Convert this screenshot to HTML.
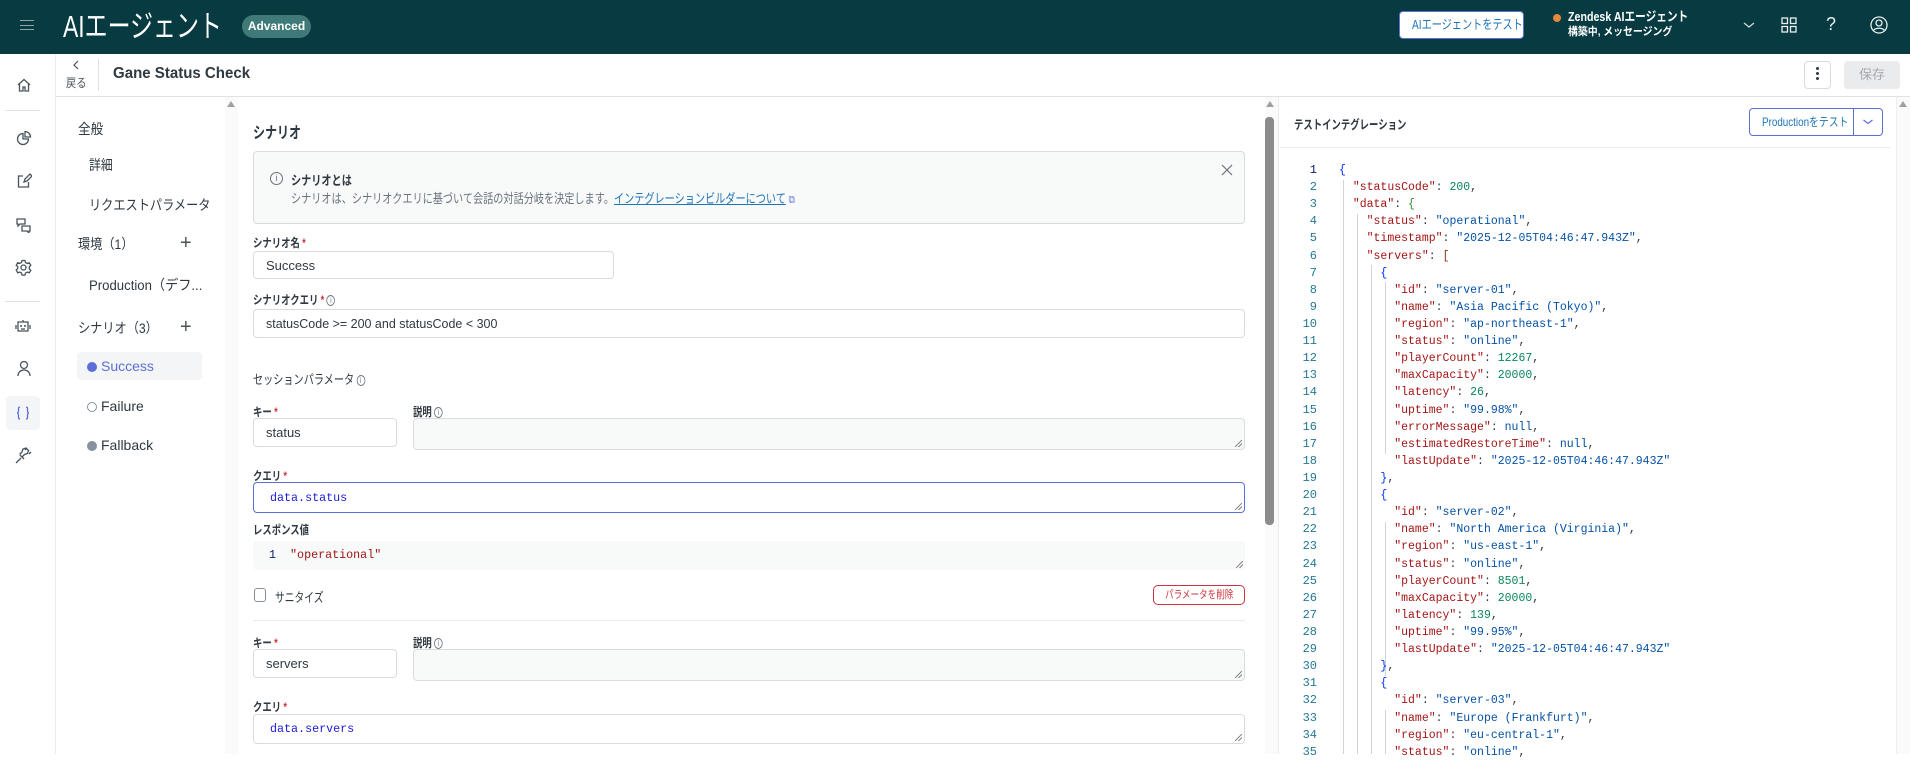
<!DOCTYPE html>
<html><head><meta charset="utf-8"><style>
*{box-sizing:border-box;margin:0;padding:0}
body{width:1910px;height:754px;overflow:hidden;background:#fff;font-family:"Liberation Sans","Noto Sans CJK JP",sans-serif;color:#2f3941;position:relative;font-size:13px}
.a{position:absolute;white-space:nowrap}
.sx{display:inline-block;transform:scaleX(.76);transform-origin:0 50%;white-space:nowrap}
.hdr{left:0;top:0;width:1910px;height:54px;background:#073a41}
.ic{stroke:#49545c;fill:none;stroke-width:1.3}
.lbl{font-size:12px;font-weight:bold;color:#2f3941}
.req{color:#cc3340;margin-left:3px}
.inp{border:1px solid #d8dcde;border-radius:4px;background:#fff;font-size:13px;padding-left:12px;display:flex;align-items:center}
.gray{background:#f8f9f9}
.mono{font-family:"Liberation Mono",monospace}
.code{left:1290px;top:162px;font-family:"Liberation Mono",monospace;font-size:11.5px;line-height:17.12px;white-space:pre}
.code div{height:17.12px;overflow:visible}
.ln{display:inline-block;width:27px;text-align:right;color:#237893;margin-right:22px;font-size:12px}
.k{color:#a31515}.s{color:#0451a5}.n{color:#098658}.b1{color:#0431fa}.b2{color:#319331}.b3{color:#7b3814}.nl{color:#0451a5}
.info{display:inline-block;width:11px;height:11px;border:1px solid #68737d;border-radius:50%;font-size:8px;line-height:9px;text-align:center;color:#68737d;font-weight:normal;vertical-align:1px;margin-left:3px}
.nav{font-size:14px;color:#2f3941}
.rz{position:absolute;right:2px;bottom:2px;width:7px;height:7px;background:linear-gradient(135deg,transparent 45%,#888 45%,#888 55%,transparent 55%,transparent 70%,#888 70%,#888 80%,transparent 80%)}
</style></head><body>
<div class="a hdr"></div>
<div class="a" style="left:20px;top:20px;width:14px;height:10px;border-top:1.5px solid #8fa5a8;border-bottom:1.5px solid #8fa5a8"></div>
<div class="a" style="left:20px;top:24.5px;width:14px;height:1.5px;background:#8fa5a8"></div>
<div class="a" style="left:63px;top:6px;font-size:31px;color:#fff;line-height:42px"><span class="sx" style="transform:scaleX(.74)">AIエージェント</span></div>
<div class="a" style="left:242px;top:15px;width:69px;height:23px;border-radius:12px;background:#3f7a78;color:#fff;font-size:12px;font-weight:bold;line-height:23px;text-align:center">Advanced</div>
<div class="a" style="left:1399px;top:11px;width:125px;height:28px;background:#fff;border:1px solid #5d73d4;border-radius:4px;color:#1f73b7;font-size:13px;line-height:26px;padding-left:12px"><span class="sx" style="transform:scaleX(.78)">AIエージェントをテスト</span></div>
<div class="a" style="left:1553px;top:14px;width:8px;height:8px;border-radius:50%;background:#e38a3e"></div>
<div class="a" style="left:1568px;top:9px;color:#fff;font-size:13px;font-weight:bold;line-height:16px"><span class="sx" style="transform:scaleX(.82)">Zendesk AIエージェント</span></div>
<div class="a" style="left:1568px;top:25px;color:#fff;font-size:11px;font-weight:bold;line-height:14px"><span class="sx" style="transform:scaleX(.9)">構築中, メッセージング</span></div>
<svg class="a" style="left:1742px;top:20px" width="14" height="10"><path d="M2 3l5 4 5-4" stroke="#cfd8d9" fill="none" stroke-width="1.3"/></svg>
<svg class="a" style="left:1780px;top:16px" width="18" height="18"><g stroke="#e8eeee" fill="none" stroke-width="1.3"><rect x="2" y="2" width="5.5" height="5.5"/><rect x="10.5" y="2" width="5.5" height="5.5"/><rect x="2" y="10.5" width="5.5" height="5.5"/><rect x="10.5" y="10.5" width="5.5" height="5.5"/></g></svg>
<div class="a" style="left:1826px;top:14px;color:#e8eeee;font-size:18px">?</div>
<svg class="a" style="left:1869px;top:15px" width="20" height="20"><g stroke="#e8eeee" fill="none" stroke-width="1.3"><circle cx="10" cy="10" r="8"/><circle cx="10" cy="8" r="3"/><path d="M4.5 15.5c2-3 9-3 11 0"/></g></svg>

<!-- left rail -->
<div class="a" style="left:55px;top:54px;width:1px;height:700px;background:#e9ebed"></div>
<div class="a" style="left:5px;top:110px;width:35px;height:1px;background:#e0e3e5"></div>
<div class="a" style="left:5px;top:301px;width:35px;height:1px;background:#e0e3e5"></div>
<div class="a" style="left:6px;top:396px;width:34px;height:34px;border-radius:4px;background:#f3f5f6"></div>
<svg class="a" style="left:16px;top:77px" width="16" height="16"><path class="ic" d="M2 8L8 2.5 14 8M3.5 6.5V14h3.5v-4h2v4h3.5V6.5"/></svg>
<svg class="a" style="left:16px;top:130px" width="16" height="16"><path class="ic" d="M7 3.5a5.5 5.5 0 1 0 5.5 5.5H7zM9 1.5v5.5h5.5A5.5 5.5 0 0 0 9 1.5z"/></svg>
<svg class="a" style="left:16px;top:173px" width="16" height="16"><path class="ic" d="M7 3H2.5v11h10V9M8 9l1-3 5-5 2 2-5 5z"/></svg>
<svg class="a" style="left:15px;top:217px" width="17" height="16"><path class="ic" d="M2 2h8v5H5l-2 2V7H2zM7 9h8v5h-1v2l-2-2H7z"/></svg>
<svg class="a" style="left:15px;top:259px" width="17" height="17"><circle class="ic" cx="8.5" cy="8.5" r="2.5"/><path class="ic" d="M7 1.5h3l.5 2 1.8 1 2-.7 1.5 2.6-1.5 1.4v2l1.5 1.4-1.5 2.6-2-.7-1.8 1-.5 2H7l-.5-2-1.8-1-2 .7L1.2 11l1.5-1.4v-2L1.2 6.3l1.5-2.6 2 .7 1.8-1z"/></svg>
<svg class="a" style="left:14px;top:318px" width="18" height="16"><path class="ic" d="M4 4h10v9H4zM2 7v4M16 7v4M9 2v2"/><circle cx="7" cy="8" r="1" fill="#49545c"/><circle cx="11" cy="8" r="1" fill="#49545c"/><path class="ic" d="M7 11h4"/></svg>
<svg class="a" style="left:16px;top:360px" width="16" height="17"><circle class="ic" cx="8" cy="5" r="3.5"/><path class="ic" d="M2 16c0-4 3-6 6-6s6 2 6 6"/></svg>
<svg class="a" style="left:15px;top:405px" width="16" height="16"><path d="M5 2C3 2 3.5 4 3.5 6S2 8 2 8s1.5 0 1.5 2S3 14 5 14M11 2c2 0 1.5 2 1.5 4S14 8 14 8s-1.5 0-1.5 2 .5 4-1.5 4" stroke="#5c6fd8" fill="none" stroke-width="1.3"/></svg>
<svg class="a" style="left:15px;top:447px" width="17" height="17"><path class="ic" d="M1 16l5-5M5 8l4 4M7 10l2.5-2.5 3-1 1-3L11 1 8 2 7 5 4.5 7.5M12 1l-2 2M16 5l-2 2"/></svg>

<!-- subheader -->
<div class="a" style="left:56px;top:96px;width:1854px;height:1px;background:#e0e3e5"></div>
<svg class="a" style="left:72px;top:60px" width="8" height="10"><path d="M6 1L2 5l4 4" stroke="#49545c" fill="none" stroke-width="1.2"/></svg>
<div class="a" style="left:66px;top:74px;font-size:12px;color:#49545c"><span class="sx" style="transform:scaleX(.85)">戻る</span></div>
<div class="a" style="left:98px;top:59px;width:1px;height:32px;background:#e0e3e5"></div>
<div class="a" style="left:113px;top:65px;font-size:16px;font-weight:bold;color:#2f3941"><span class="sx" style="transform:scaleX(.94)">Gane Status Check</span></div>
<div class="a" style="left:1804px;top:61px;width:27px;height:28px;border:1px solid #d8dcde;border-radius:4px;background:#fff"></div>
<div class="a" style="left:1816px;top:67px;width:3px;height:3px;background:#2f3941;border-radius:50%;box-shadow:0 5px 0 #2f3941,0 10px 0 #2f3941"></div>
<div class="a" style="left:1844px;top:61px;width:56px;height:28px;border-radius:4px;background:#e9ebed;color:#a2aab0;font-size:13px;line-height:28px;text-align:center">保存</div>

<!-- secondary nav -->
<div class="a" style="left:225px;top:97px;width:13px;height:657px;background:#fafafa"></div>
<div class="a" style="left:227px;top:101px;width:0;height:0;border-left:4.5px solid transparent;border-right:4.5px solid transparent;border-bottom:6px solid #a0a0a0"></div>
<div class="a nav" style="left:78px;top:119px"><span class="sx" style="transform:scaleX(.9)">全般</span></div>
<div class="a nav" style="left:89px;top:155px"><span class="sx" style="transform:scaleX(.85)">詳細</span></div>
<div class="a nav" style="left:89px;top:195px"><span class="sx" style="transform:scaleX(.87)">リクエストパラメータ</span></div>
<div class="a nav" style="left:78px;top:234px"><span class="sx" style="transform:scaleX(.87)">環境（1）</span></div>
<div class="a" style="left:180px;top:232px;font-size:20px;color:#49545c;font-weight:300">+</div>
<div class="a nav" style="left:89px;top:275px"><span class="sx" style="transform:scaleX(.94)">Production（デフ...</span></div>
<div class="a nav" style="left:78px;top:318px"><span class="sx" style="transform:scaleX(.87)">シナリオ（3）</span></div>
<div class="a" style="left:180px;top:316px;font-size:20px;color:#49545c;font-weight:300">+</div>
<div class="a" style="left:77px;top:352px;width:125px;height:28px;border-radius:4px;background:#f3f5f6"></div>
<div class="a" style="left:87px;top:362px;width:10px;height:10px;border-radius:50%;background:#5c6fd8"></div>
<div class="a nav" style="left:101px;top:358px;color:#5c6fd8">Success</div>
<div class="a" style="left:87px;top:402px;width:10px;height:10px;border-radius:50%;border:1px solid #87929d"></div>
<div class="a nav" style="left:101px;top:398px">Failure</div>
<div class="a" style="left:87px;top:441px;width:10px;height:10px;border-radius:50%;background:#87929d"></div>
<div class="a nav" style="left:101px;top:437px">Fallback</div>

<!-- main -->
<div class="a" style="left:1265px;top:97px;width:13px;height:657px;background:#fafafa"></div>
<div class="a" style="left:1266px;top:101px;width:0;height:0;border-left:4.5px solid transparent;border-right:4.5px solid transparent;border-bottom:6px solid #a0a0a0"></div>
<div class="a" style="left:1265px;top:117px;width:9px;height:408px;border-radius:4px;background:#8c8c8c"></div>
<div class="a" style="left:1278px;top:97px;width:1px;height:657px;background:#e9ebed"></div>

<div class="a" style="left:253px;top:119px;font-size:16px;font-weight:bold;color:#2f3941"><span class="sx" style="transform:scaleX(.75)">シナリオ</span></div>
<div class="a gray" style="left:253px;top:151px;width:992px;height:73px;border:1px solid #d8dcde;border-radius:4px"></div>
<div class="a" style="left:270px;top:172px;width:13px;height:13px;border:1px solid #68737d;border-radius:50%;font-size:9px;text-align:center;line-height:11px;color:#68737d">i</div>
<div class="a" style="left:291px;top:170px;font-size:13px;font-weight:bold"><span class="sx" style="transform:scaleX(.78)">シナリオとは</span></div>
<div class="a" style="left:291px;top:188px;font-size:13px;color:#68737d"><span class="sx" style="transform:scaleX(.78)">シナリオは、シナリオクエリに基づいて会話の対話分岐を決定します。<span style="color:#1f73b7;text-decoration:underline">インテグレーションビルダーについて</span> <span style="color:#5c6fd8;font-size:11px">⧉</span></span></div>
<svg class="a" style="left:1221px;top:164px" width="12" height="12"><path d="M1 1l10 10M11 1L1 11" stroke="#68737d" stroke-width="1.2"/></svg>

<div class="a lbl" style="left:253px;top:234px"><span class="sx" style="transform:scaleX(.78)">シナリオ名<span class="req">*</span></span></div>
<div class="a inp" style="left:253px;top:251px;width:361px;height:28px">Success</div>
<div class="a lbl" style="left:253px;top:291px"><span class="sx" style="transform:scaleX(.78)">シナリオクエリ<span class="req">*</span><span class="info">i</span></span></div>
<div class="a inp" style="left:253px;top:309px;width:992px;height:29px"><span class="sx" style="transform:scaleX(.96)">statusCode &gt;= 200 and statusCode &lt; 300</span></div>
<div class="a" style="left:253px;top:369px;font-size:13px"><span class="sx" style="transform:scaleX(.78)">セッションパラメータ<span class="info">i</span></span></div>

<div class="a lbl" style="left:253px;top:403px"><span class="sx" style="transform:scaleX(.78)">キー<span class="req">*</span></span></div>
<div class="a lbl" style="left:413px;top:403px"><span class="sx" style="transform:scaleX(.78)">説明<span class="info">i</span></span></div>
<div class="a inp" style="left:253px;top:418px;width:144px;height:29px">status</div>
<div class="a inp gray" style="left:413px;top:418px;width:832px;height:32px"><span class="rz"></span></div>
<div class="a lbl" style="left:253px;top:467px"><span class="sx" style="transform:scaleX(.78)">クエリ<span class="req">*</span></span></div>
<div class="a inp mono" style="left:253px;top:482px;width:992px;height:31px;border-color:#5c6fd8;color:#1a1ad8;padding-left:16px;font-size:11.7px">data.status<span class="rz"></span></div>
<div class="a lbl" style="left:253px;top:521px"><span class="sx" style="transform:scaleX(.78)">レスポンス値</span></div>
<div class="a gray mono" style="left:253px;top:541px;width:992px;height:29px;border-radius:4px;font-size:11.7px;line-height:29px;padding-left:16px"><span style="color:#0b216f">1</span>&nbsp;&nbsp;<span style="color:#a31515">"operational"</span><span class="rz"></span></div>
<div class="a" style="left:254px;top:588px;width:12px;height:14px;border:1px solid #87929d;border-radius:3px"></div>
<div class="a" style="left:275px;top:587px;font-size:13px"><span class="sx" style="transform:scaleX(.75)">サニタイズ</span></div>
<div class="a" style="left:1153px;top:585px;width:92px;height:20px;border:1px solid #cc3340;border-radius:5px;color:#cc3340;font-size:11px;line-height:18px;padding-left:11px"><span class="sx" style="transform:scaleX(.78)">パラメータを削除</span></div>
<div class="a" style="left:253px;top:620px;width:992px;height:1px;background:#e9ebed"></div>

<div class="a lbl" style="left:253px;top:634px"><span class="sx" style="transform:scaleX(.78)">キー<span class="req">*</span></span></div>
<div class="a lbl" style="left:413px;top:634px"><span class="sx" style="transform:scaleX(.78)">説明<span class="info">i</span></span></div>
<div class="a inp" style="left:253px;top:649px;width:144px;height:29px">servers</div>
<div class="a inp gray" style="left:413px;top:649px;width:832px;height:32px"><span class="rz"></span></div>
<div class="a lbl" style="left:253px;top:698px"><span class="sx" style="transform:scaleX(.78)">クエリ<span class="req">*</span></span></div>
<div class="a inp mono" style="left:253px;top:714px;width:992px;height:30px;color:#1a1ad8;padding-left:16px;font-size:11.7px">data.servers<span class="rz"></span></div>

<!-- right panel -->
<div class="a" style="left:1294px;top:114px;font-size:12.5px;font-weight:bold"><span class="sx" style="transform:scaleX(.75)">テストインテグレーション</span></div>
<div class="a" style="left:1749px;top:108px;width:105px;height:28px;border:1px solid #5c6fd8;border-radius:4px 0 0 4px;color:#1f73b7;font-size:12px;line-height:26px;padding-left:12px"><span class="sx" style="transform:scaleX(.82)">Productionをテスト</span></div>
<div class="a" style="left:1853px;top:108px;width:30px;height:28px;border:1px solid #5c6fd8;border-radius:0 4px 4px 0"></div>
<svg class="a" style="left:1862px;top:117px" width="12" height="10"><path d="M1.5 3l4.5 3.5 4.5-3.5" stroke="#5c6fd8" fill="none" stroke-width="1.2"/></svg>
<div class="a" style="left:1280px;top:147px;width:610px;height:1px;background:#e9ebed"></div>
<div class="a" style="left:1896px;top:97px;width:14px;height:657px;background:#fafafa;border-left:1px solid #eee"></div>
<div class="a" style="left:1899px;top:101px;width:0;height:0;border-left:4.5px solid transparent;border-right:4.5px solid transparent;border-bottom:6px solid #a0a0a0"></div>
<!-- indent guides -->
<div class="a" style="left:1343px;top:180px;width:1px;height:574px;background:#d3d3d3"></div>
<div class="a" style="left:1357px;top:214px;width:1px;height:540px;background:#d3d3d3"></div>
<div class="a" style="left:1371px;top:265px;width:1px;height:489px;background:#d3d3d3"></div>
<div class="a" style="left:1385px;top:282px;width:1px;height:172px;background:#d3d3d3"></div>
<div class="a" style="left:1385px;top:522px;width:1px;height:154px;background:#d3d3d3"></div>
<div class="a" style="left:1385px;top:710px;width:1px;height:44px;background:#d3d3d3"></div>
<div class="a code"><div><span class="ln" style="color:#0b216f">1</span><span class="b1">{</span></div><div><span class="ln">2</span>  <span class="k">"statusCode"</span>: <span class="n">200</span>,</div><div><span class="ln">3</span>  <span class="k">"data"</span>: <span class="b2">{</span></div><div><span class="ln">4</span>    <span class="k">"status"</span>: <span class="s">"operational"</span>,</div><div><span class="ln">5</span>    <span class="k">"timestamp"</span>: <span class="s">"2025-12-05T04:46:47.943Z"</span>,</div><div><span class="ln">6</span>    <span class="k">"servers"</span>: <span class="b3">[</span></div><div><span class="ln">7</span>      <span class="b1">{</span></div><div><span class="ln">8</span>        <span class="k">"id"</span>: <span class="s">"server-01"</span>,</div><div><span class="ln">9</span>        <span class="k">"name"</span>: <span class="s">"Asia Pacific (Tokyo)"</span>,</div><div><span class="ln">10</span>        <span class="k">"region"</span>: <span class="s">"ap-northeast-1"</span>,</div><div><span class="ln">11</span>        <span class="k">"status"</span>: <span class="s">"online"</span>,</div><div><span class="ln">12</span>        <span class="k">"playerCount"</span>: <span class="n">12267</span>,</div><div><span class="ln">13</span>        <span class="k">"maxCapacity"</span>: <span class="n">20000</span>,</div><div><span class="ln">14</span>        <span class="k">"latency"</span>: <span class="n">26</span>,</div><div><span class="ln">15</span>        <span class="k">"uptime"</span>: <span class="s">"99.98%"</span>,</div><div><span class="ln">16</span>        <span class="k">"errorMessage"</span>: <span class="nl">null</span>,</div><div><span class="ln">17</span>        <span class="k">"estimatedRestoreTime"</span>: <span class="nl">null</span>,</div><div><span class="ln">18</span>        <span class="k">"lastUpdate"</span>: <span class="s">"2025-12-05T04:46:47.943Z"</span></div><div><span class="ln">19</span>      <span class="b1">}</span>,</div><div><span class="ln">20</span>      <span class="b1">{</span></div><div><span class="ln">21</span>        <span class="k">"id"</span>: <span class="s">"server-02"</span>,</div><div><span class="ln">22</span>        <span class="k">"name"</span>: <span class="s">"North America (Virginia)"</span>,</div><div><span class="ln">23</span>        <span class="k">"region"</span>: <span class="s">"us-east-1"</span>,</div><div><span class="ln">24</span>        <span class="k">"status"</span>: <span class="s">"online"</span>,</div><div><span class="ln">25</span>        <span class="k">"playerCount"</span>: <span class="n">8501</span>,</div><div><span class="ln">26</span>        <span class="k">"maxCapacity"</span>: <span class="n">20000</span>,</div><div><span class="ln">27</span>        <span class="k">"latency"</span>: <span class="n">139</span>,</div><div><span class="ln">28</span>        <span class="k">"uptime"</span>: <span class="s">"99.95%"</span>,</div><div><span class="ln">29</span>        <span class="k">"lastUpdate"</span>: <span class="s">"2025-12-05T04:46:47.943Z"</span></div><div><span class="ln">30</span>      <span class="b1">}</span>,</div><div><span class="ln">31</span>      <span class="b1">{</span></div><div><span class="ln">32</span>        <span class="k">"id"</span>: <span class="s">"server-03"</span>,</div><div><span class="ln">33</span>        <span class="k">"name"</span>: <span class="s">"Europe (Frankfurt)"</span>,</div><div><span class="ln">34</span>        <span class="k">"region"</span>: <span class="s">"eu-central-1"</span>,</div><div><span class="ln">35</span>        <span class="k">"status"</span>: <span class="s">"online"</span>,</div></div>
</body></html>
